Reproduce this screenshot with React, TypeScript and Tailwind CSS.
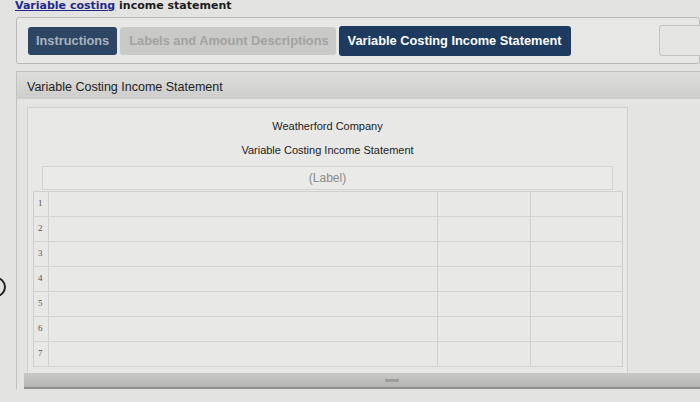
import React from "react";

const rows = [1, 2, 3, 4, 5, 6, 7];

export default function App() {
  return (
    <div
      className="relative w-[700px] h-[402px] overflow-hidden bg-[#e3e3e1] text-black"
      style={{ fontFamily: '"Liberation Sans", Arial, sans-serif' }}
    >
      {/* title */}
      <div
        className="h-[13px] pl-[15px] text-[11px] font-bold leading-[12px] whitespace-nowrap text-[#1c1c1c]"
        style={{ fontFamily: '"DejaVu Sans", Verdana, sans-serif' }}
      >
        <span className="text-[#1f2a8c] underline">Variable costing</span> income statement
      </div>

      {/* tab bar */}
      <div className="ml-[16px] mt-[4px] h-[47px] rounded-[3px] border border-[#b9b9b7] bg-[#e7e7e5] flex items-center pl-[11px] gap-[3px]">
        <div className="h-[28px] px-[8px] rounded-[3px] bg-[#2c4663] text-[#a9b4c0] font-bold text-[12.8px] flex items-center">
          Instructions
        </div>
        <div className="h-[28px] pl-[9px] pr-[7px] rounded-[3px] bg-[#c9c9c7] text-[#a3a3a1] font-bold text-[12.8px] flex items-center">
          Labels and Amount Descriptions
        </div>
        <div className="h-[30px] px-[9px] rounded-[3px] bg-[#1e3a5f] text-white font-bold text-[12.8px] flex items-center">
          Variable Costing Income Statement
        </div>
        <div className="ml-auto -mr-[6px] w-[46px] h-[31px] rounded-[3px] border border-[#c3c3c1] bg-[#e5e5e3]" />
      </div>

      {/* panel */}
      <div className="ml-[16px] mt-[7px] border-l border-t border-[#c2c2c0] bg-[#e4e4e2]">
        <div className="h-[27px] bg-gradient-to-b from-[#dededc] to-[#cdcdcb] pl-[10px] pt-[8px] text-[12.5px] leading-[14px] text-[#222]">
          Variable Costing Income Statement
        </div>
        <div className="pl-[10px] pt-[8px]">
          <div className="w-[601px] h-[266px] overflow-hidden border-l border-t border-r border-[#d0d0ce] bg-[#e8e8e6]">
            <div className="h-[27px] flex items-end justify-center text-[11px] text-[#222] pb-[1px]">
              Weatherford Company
            </div>
            <div className="h-[24px] flex items-end justify-center text-[11px] text-[#222] pb-[1px]">
              Variable Costing Income Statement
            </div>
            <div className="mx-[14px] mt-[7px] h-[24px] border border-[#d4d4d2] bg-[#eaeae8] flex items-center justify-center text-[12px] text-[#8a8a88]">
              (Label)
            </div>
            <div className="ml-[5px] mr-[4px] mt-[1px] border-l border-t border-[#d0d0ce]">
              {rows.map((r) => (
                <div key={r} className="flex h-[25px] border-b border-[#d2d2d0]">
                  <div
                    className="w-[15px] border-r border-[#d2d2d0] text-[9px] text-[#555] flex items-center pl-[4px]"
                    style={{ fontFamily: '"Liberation Serif", serif' }}
                  >
                    {r}
                  </div>
                  <div className="w-[389px] border-r border-[#cfcfcd]" />
                  <div className="w-[93px] border-r border-[#cfcfcd]" />
                  <div className="flex-1 border-r border-[#cfcfcd]" />
                </div>
              ))}
            </div>
          </div>
        </div>
        <div className="ml-[7px] h-[16px] bg-gradient-to-b from-[#c9c9c7] to-[#b5b5b3] border-b-2 border-[#8e8e8c] flex items-center">
          <div className="ml-[361px] w-[14px] h-[3px] bg-[#9e9e9c] rounded-[1px]" />
        </div>
      </div>

      {/* cut-off circle at left */}
      <div className="absolute left-[-14px] top-[277px] w-[20px] h-[20px] rounded-full border-2 border-[#222]" />
    </div>
  );
}
